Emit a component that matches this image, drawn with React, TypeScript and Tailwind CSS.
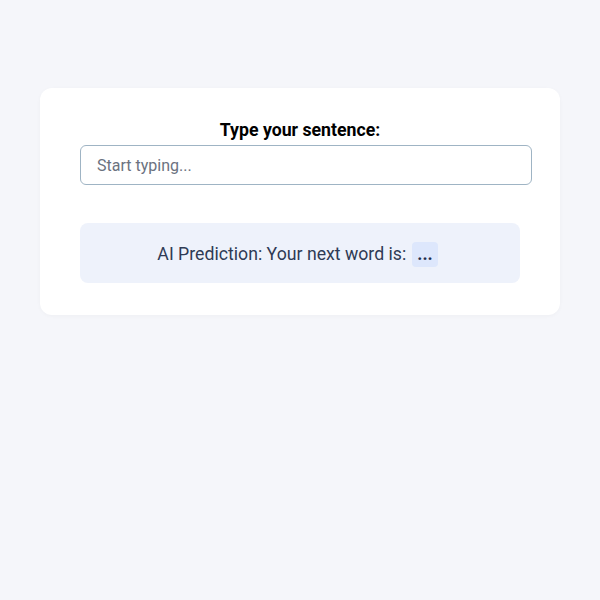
export default function App() {
  return (
    <div className="min-h-[600px] w-full bg-[#f5f6fa] pt-[88px] px-10" style={{ fontFamily: 'Roboto, "Liberation Sans", sans-serif' }}>
      <div className="bg-white rounded-xl w-[520px] px-10 pt-[30px] pb-8 shadow-[0_1px_4px_rgba(0,0,0,0.03)]">
        <label className="block text-center text-[17.7px] font-bold text-black leading-6 mb-[3px]">
          Type your sentence:
        </label>
        <input
          type="text"
          placeholder="Start typing..."
          className="w-[452px] h-10 px-4 text-[16px] border border-[#9fb4c4] rounded-md outline-none placeholder:text-[#6b7280]"
        />
        <div className="mt-[38px] h-[60px] pt-0.5 pr-[5px] bg-[#eef2fb] rounded-lg flex items-center justify-center text-[17.7px] text-[#2f3b55]">
          <span>AI Prediction: Your next word is:</span>
          <span className="ml-[6px] px-[5px] h-[25px] flex items-center bg-[#dde7fc] rounded text-[#1e2d4d] font-bold">...</span>
        </div>
      </div>
    </div>
  );
}
